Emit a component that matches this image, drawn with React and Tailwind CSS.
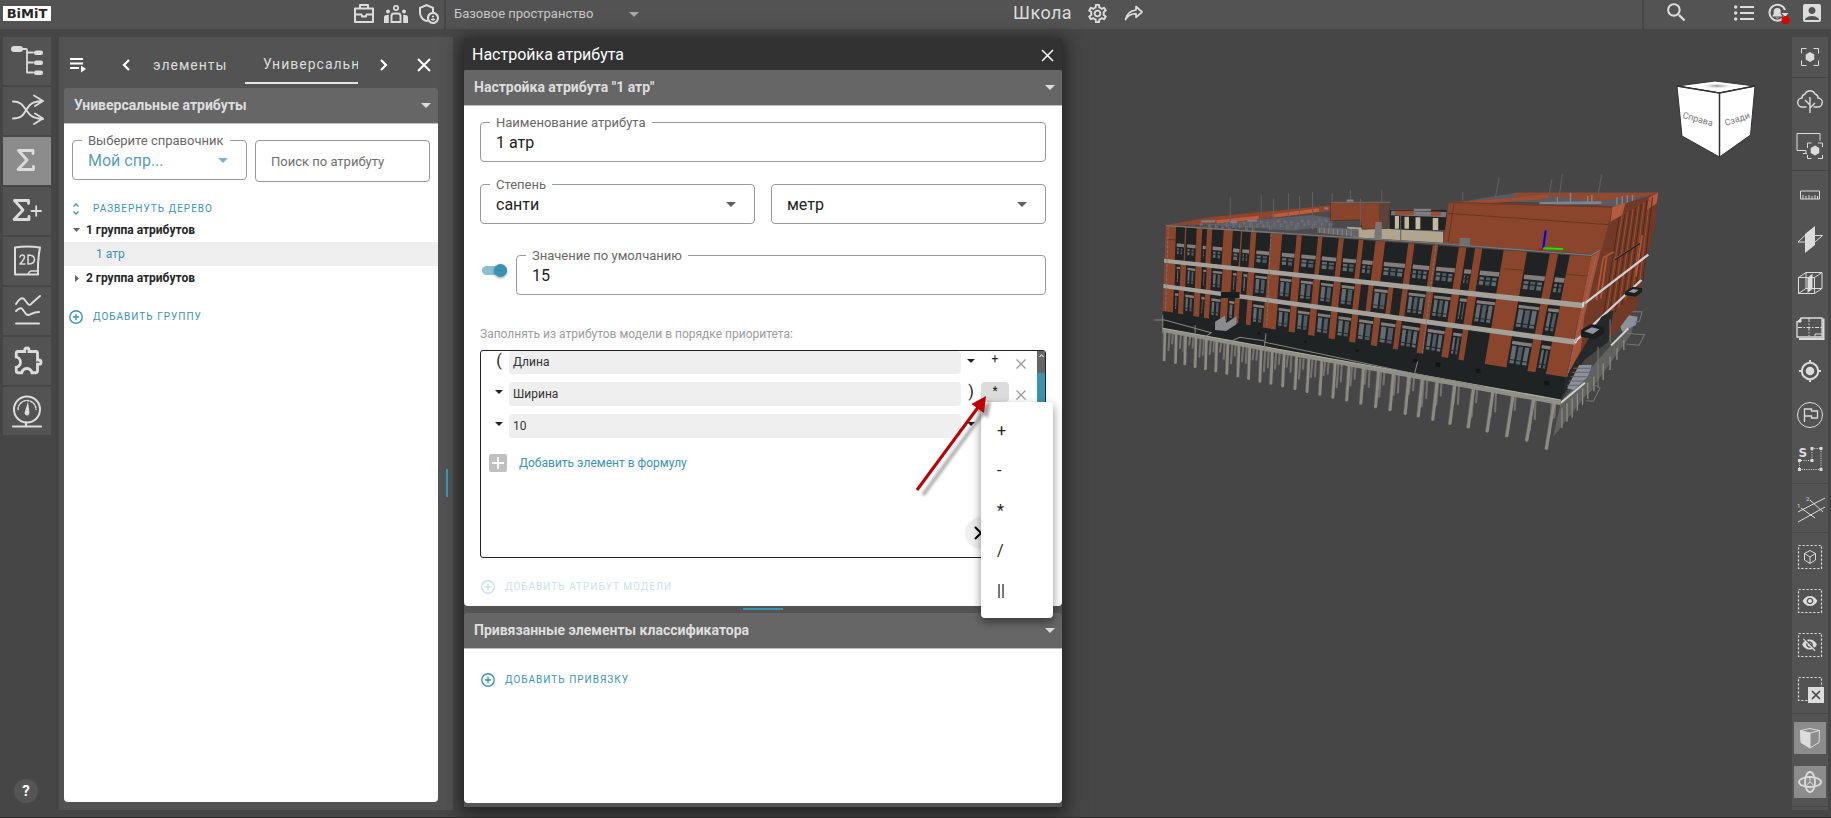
import React from "react";
import {
  MdSearch,
  MdAccountBox,
  MdOutlineAdminPanelSettings,
  MdOutlineSettings,
  MdOutlineExtension,
  MdVisibility,
  MdVisibilityOff,
} from "react-icons/md";

/* ---------- small shared pieces ---------- */

function Caret({ className = "" }) {
  return (
    <svg className={`h-[5px] w-[10px] shrink-0 ${className}`} viewBox="0 0 10 5" fill="currentColor" aria-hidden="true">
      <path d="M0 0h10L5 5z" />
    </svg>
  );
}

function SmallCaret() {
  return (
    <svg className="h-1 w-2" viewBox="0 0 8 4" fill="currentColor" aria-hidden="true">
      <path d="M0 0h8L4 4z" />
    </svg>
  );
}

function PlusCircle() {
  return (
    <svg className="h-[14px] w-[14px] shrink-0" viewBox="0 0 14 14" fill="none" stroke="currentColor" strokeWidth="1.4" aria-hidden="true">
      <circle cx="7" cy="7" r="6.2" />
      <path d="M7 3.8v6.4M3.8 7h6.4" />
    </svg>
  );
}

function AddButton({ children, className = "text-[#3a94b1]" }) {
  return (
    <button type="button" className={`flex items-center gap-[10px] text-[10px] leading-4 tracking-widest uppercase ${className}`}>
      <PlusCircle />
      {children}
    </button>
  );
}

function SectionHeader({ children, className = "" }) {
  return (
    <div className={`flex h-9 items-center justify-between rounded-t-[3px] border-b border-[#bdbdbd] bg-[#666] text-[14px] font-bold text-[#dedede] ${className}`}>
      <h2>{children}</h2>
      <Caret />
    </div>
  );
}

function Field({ id, label, children, className = "" }) {
  return (
    <div className={`relative h-10 rounded border border-[#999] ${className}`}>
      {label && (
        <label htmlFor={id} className="absolute -top-2 left-[9px] bg-white px-[6px] text-[13px] leading-4 whitespace-nowrap text-[#686868]">
          {label}
        </label>
      )}
      {children}
    </div>
  );
}

function SelectField({ id, label, value, className = "", tone = "text-[#222]", caretTone = "text-[#5f5f5f]" }) {
  return (
    <Field id={id} label={label} className={`min-w-0 ${className}`}>
      <select id={id} aria-label={label ? undefined : "Единица измерения"} defaultValue={value} className={`h-full w-full appearance-none bg-transparent pt-[2px] pr-8 pl-[15px] text-[16px] outline-none ${tone}`}>
        <option>{value}</option>
      </select>
      <Caret className={`pointer-events-none absolute top-[17px] right-[18px] ${caretTone}`} />
    </Field>
  );
}

/* ---------- header ---------- */

function Header() {
  return (
    <header className="flex h-[29px] shrink-0 items-center bg-[#535353] text-[#dcdcdc]">
      <a href="#home" className="mt-[-2px] ml-[3px] flex h-[15px] w-12 items-center justify-center bg-white font-['DejaVu_Sans'] text-[13px] leading-none font-bold text-[#262626]">
        BiM
        <span className="relative">
          i<span className="absolute top-[1px] left-[1px] h-[2px] w-[2px] bg-[#e00]" />
        </span>
        T
      </a>
      <nav className="ml-[301px] flex items-center gap-[8px]">
        <button type="button" aria-label="Проекты" className="mb-1">
          <svg className="h-5 w-6" viewBox="0 0 24 20" fill="none" stroke="currentColor" strokeWidth="2">
            <path d="M3 5.500h18v13.500H3zM3 11.500h7M14 11.500h7M8 5V2h8v3M10 11.500v2h4v-2" strokeLinejoin="round" />
          </svg>
        </button>
        <button type="button" aria-label="Участники" className="mb-1">
          <svg className="h-5 w-6" viewBox="0 0 24 20" fill="currentColor">
            <circle cx="12" cy="5" r="2.200" fill="none" stroke="currentColor" strokeWidth="1.700" />
            <circle cx="4" cy="8.500" r="2" />
            <circle cx="20" cy="8.500" r="2" />
            <path d="M7.500 19v-6q0-2.500 2.500-2.500h4q2.500 0 2.500 2.500v6z" fill="none" stroke="currentColor" strokeWidth="1.900" />
            <path d="M0 20v-5.500Q0 12 2.500 12h2.300v8zM24 20v-5.500Q24 12 21.500 12h-2.300v8z" />
          </svg>
        </button>
        <button type="button" aria-label="Администрирование" className="mb-1">
          <MdOutlineAdminPanelSettings className="h-6 w-6" />
        </button>
      </nav>
      <div className="ml-1 flex h-full flex-1 items-center border-l-2 border-[#464646] pl-2">
        <label className="relative flex items-center">
          <select aria-label="Пространство" className="mb-[2px] w-[185px] appearance-none bg-transparent text-[13px] text-[#c8c8c8] outline-none">
            <option>Базовое пространство</option>
          </select>
          <Caret className="pointer-events-none absolute top-[8px] right-0 text-[#a8a8a8]" />
        </label>
        <div className="mb-[3px] ml-[374px] flex items-center">
          <h1 className="text-[18px] leading-6 tracking-wide">Школа</h1>
          <button type="button" aria-label="Настройки" className="ml-[14px]">
            <MdOutlineSettings className="h-[23px] w-[23px]" />
          </button>
          <button type="button" aria-label="Поделиться" className="ml-[15px]">
            <svg className="h-5 w-5" viewBox="0 0 20 20" fill="none" stroke="currentColor" strokeWidth="1.700" strokeLinejoin="round">
              <path d="M12 3.500 18 9l-6 5.300v-3.600C7 10.700 4 12.500 1.500 16.500 2.600 11 6 7.700 12 7z" />
            </svg>
          </button>
        </div>
      </div>
      <nav className="flex h-full items-center border-l-2 border-[#464646] pb-1">
        <button type="button" aria-label="Поиск" className="ml-5">
          <MdSearch className="h-[25px] w-[25px]" />
        </button>
        <button type="button" aria-label="Список" className="ml-[45px]">
          <svg className="h-4 w-5" viewBox="0 0 20 16" fill="currentColor">
            <path d="M6 1h14v2H6zM6 7h14v2H6zM6 13h14v2H6z" />
            <circle cx="1.700" cy="2" r="1.700" />
            <circle cx="1.700" cy="8" r="1.700" />
            <circle cx="1.700" cy="14" r="1.700" />
          </svg>
        </button>
        <button type="button" aria-label="Уведомления" className="ml-3">
          <svg className="h-6 w-6" viewBox="0 0 24 24">
            <path d="M18.500 15.500a8 8 0 1 1 .5-6.500" fill="none" stroke="#dcdcdc" strokeWidth="2" />
            <path d="m15.500 12 7 0-3.500 4z" fill="#dcdcdc" />
            <path d="M6.500 15.500v-1l1.200-1.200V10.500a3.500 3.500 0 0 1 7 0v2.800l1.200 1.200v1zM9.800 16.500h3q-1.500 2-3 0z" fill="#dcdcdc" />
            <circle cx="19.500" cy="19" r="4" fill="#e00000" />
          </svg>
        </button>
        <button type="button" aria-label="Профиль" className="mr-[7px] ml-[10px]">
          <MdAccountBox className="h-6 w-6" />
        </button>
      </nav>
    </header>
  );
}

/* ---------- left rail ---------- */

const railIcons = [
  {
    name: "Дерево",
    draw: (
      <>
        <rect x="8" y="9" width="12" height="6" rx="3" fill="currentColor" stroke="none" />
        <path d="M19 12h4q1 0 1 1.200V35.500h6M24 15.500h6M24 25.500h6" strokeWidth="1.800" />
        <rect x="31" y="13.500" width="9" height="4.500" rx="2" fill="currentColor" stroke="none" />
        <rect x="31" y="23.500" width="9" height="4.500" rx="2" fill="currentColor" stroke="none" />
        <rect x="31" y="33.500" width="9" height="4.500" rx="2" fill="currentColor" stroke="none" />
      </>
    ),
  },
  {
    name: "Связи",
    draw: (
      <g strokeWidth="1.900">
        <path d="M10 14.500c8 0 10 4 13.500 9s6 8 16.500 8.500M10 31.500c8 0 10-3 13.500-9S30 14.500 40 14M31 8.500l9 5.500-8 5M31 37l9-5.500-8-5" />
      </g>
    ),
  },
  { name: "Атрибуты", active: true, draw: <path d="M30 16.500v-3H15.500L24 23l-9 9.500h15.500v-3" strokeWidth="2.800" /> },
  {
    name: "Добавить атрибут",
    draw: (
      <>
        <path d="M25.500 16.500v-3H11.500l8.500 9.500-9 9.500h15v-3" strokeWidth="2.800" />
        <path d="M28.500 24H38M33.200 19.200v9.600" strokeWidth="1.800" />
      </>
    ),
  },
  {
    name: "2D",
    draw: (
      <>
        <path d="M12 10.500q12-2 25 0-2.500 13-2 27H12z" strokeWidth="2" />
        <path d="M25 37q1-2.500 3-3h7" strokeWidth="1.600" />
        <path d="M17 20q.5-2 2.300-2 2.200 0 2.200 2 0 2-4.500 7h5M25 18v9q6.500 0 6.500-4.500T25 18z" strokeWidth="1.500" />
      </>
    ),
  },
  { name: "Графики", draw: <path d="M13 17q5-8 8-5l4 5q2 2 4-1l8-7M13 24q5-5 7-1l3 4q2 2 5 0 4-2 8-2M13 36.500h23" strokeWidth="2" /> },
  { name: "Плагины", draw: null },
  {
    name: "Показатели",
    draw: (
      <>
        <circle cx="24" cy="22.500" r="13" strokeWidth="2" />
        <path d="M15 22.500a9 9 0 0 1 18 0" strokeWidth="1.500" strokeDasharray="2 1.500" />
        <path d="M25 14.500 26.500 26q-.5 2.500-2.500 2.500T21.500 26z" fill="currentColor" stroke="none" />
        <path d="M23 35.500v3M10 39.500h28" strokeWidth="2.200" />
      </>
    ),
  },
];

function LeftRail() {
  return (
    <aside className="flex w-14 shrink-0 flex-col pl-[3px]">
      <div className="flex flex-1 flex-col gap-[2px]">
        {railIcons.map((it) => (
          <button
            key={it.name}
            type="button"
            aria-label={it.name}
            className={`flex h-12 w-12 items-center justify-center text-[#dcdcdc] ${it.active ? "bg-[#8c8c8c]" : "bg-[#535353]"}`}
          >
            {it.draw ? (
              <svg className="h-12 w-12" viewBox="0 0 48 48" fill="none" stroke="currentColor" strokeLinecap="round" strokeLinejoin="round">
                {it.draw}
              </svg>
            ) : (
              <MdOutlineExtension className="mb-[2px] ml-1 h-[34px] w-[34px]" />
            )}
          </button>
        ))}
      </div>
      <button type="button" aria-label="Справка" className="mb-[7px] ml-[11px] flex h-6 w-6 items-center justify-center rounded-full bg-[#555] text-[15px] font-bold text-white">
        ?
      </button>
    </aside>
  );
}

/* ---------- attributes panel ---------- */

function Chevron({ left, className = "" }) {
  return (
    <svg className={`h-3 w-2 ${className}`} viewBox="0 0 8 12" fill="none" stroke="currentColor" strokeWidth="2.200">
      <path d={left ? "M7 1 2 6l5 5" : "M1 1l5 5-5 5"} />
    </svg>
  );
}

function AttributesPanel() {
  return (
    <section className="flex w-[394px] shrink-0 flex-col bg-[#535353] pr-[15px] pb-2 pl-[5px]">
      <div className="flex h-[51px] shrink-0 items-center pt-[5px] text-white">
        <button type="button" aria-label="Меню" className="ml-[6px] w-[22px]">
          <svg className="h-4 w-4" viewBox="0 0 16 16" fill="currentColor">
            <path d="M0 1h13v2H0zM0 5.500h13v2H0zM0 10h9v2H0zM11 8.500l5 3.500-5 3.500z" />
          </svg>
        </button>
        <button type="button" aria-label="Назад" className="ml-[30px]">
          <Chevron left />
        </button>
        <div role="tablist" className="ml-[7px] flex w-[221px] overflow-hidden text-[14px] tracking-[1px] text-[#dcdcdc]">
          <button type="button" role="tab" aria-selected="false" className="h-[38px] w-[108px] shrink-0 pr-2 pl-4 text-left">
            элементы
          </button>
          <button type="button" role="tab" aria-selected="true" className="h-[38px] min-w-0 flex-1 overflow-hidden border-b-2 border-[#e4e4e4] pl-[18px] text-left whitespace-nowrap">
            Универсальные
          </button>
        </div>
        <button type="button" aria-label="Вперёд" className="ml-[22px]">
          <Chevron />
        </button>
        <button type="button" aria-label="Закрыть" className="ml-[29px]">
          <svg className="h-[14px] w-[14px]" viewBox="0 0 14 14" stroke="currentColor" strokeWidth="2">
            <path d="M1 1l12 12M13 1 1 13" />
          </svg>
        </button>
      </div>
      <SectionHeader className="shrink-0 pr-[7px] pl-[10px]">Универсальные атрибуты</SectionHeader>
      <div className="flex-1 rounded-b bg-white">
        <div className="grid grid-cols-2 gap-2 px-2 pt-4">
          <SelectField id="dictionary" label="Выберите справочник" value="Мой спр..." tone="text-[#559fb9]" caretTone="text-[#7ab4c8]" />
          <input
            aria-label="Поиск по атрибуту"
            placeholder="Поиск по атрибуту"
            className="h-[42px] w-full min-w-0 rounded border border-[#999] px-[15px] text-[13px] outline-none placeholder:text-[#6e6e6e]"
          />
        </div>
        <button type="button" className="mt-[19px] ml-[9px] flex items-center gap-[14px] text-[10px] leading-4 tracking-widest text-[#3a94b1] uppercase">
          <svg className="h-3 w-[6px]" viewBox="0 0 6 12" fill="none" stroke="currentColor" strokeWidth="1.300">
            <path d="M.5 3.500 3 1l2.500 2.500M.5 8.500 3 11l2.500-2.500" />
          </svg>
          Развернуть дерево
        </button>
        <ul className="mt-[1px] text-[12px] leading-6 font-bold text-[#262626]">
          <li className="flex h-6 items-center gap-[6px] pl-[9px]">
            <span className="flex w-[7px] justify-center text-[#666]">
              <svg className="h-1 w-[7px]" viewBox="0 0 7 4" fill="currentColor"><path d="M0 0h7L3.500 4z" /></svg>
            </span>
            1 группа атрибутов
          </li>
          <li className="h-6 bg-[#efefef] pl-8 font-normal text-[#3a94b1]">1 атр</li>
          <li className="flex h-6 items-center gap-[6px] pl-[9px]">
            <span className="flex w-[7px] justify-center text-[#666]">
              <svg className="h-[7px] w-1" viewBox="0 0 4 7" fill="currentColor"><path d="M0 0v7l4-3.500z" /></svg>
            </span>
            2 группа атрибутов
          </li>
        </ul>
        <AddButton className="mt-[19px] ml-[5px] text-[#3a94b1]">Добавить группу</AddButton>
      </div>
    </section>
  );
}

/* ---------- attribute window ---------- */

function RemoveButton() {
  return (
    <button type="button" aria-label="Удалить" className="flex w-7 justify-center pt-2 pr-1 text-[#999]">
      <svg className="h-[10px] w-[10px]" viewBox="0 0 10 10" stroke="currentColor" strokeWidth="1.300">
        <path d="M.5.5l9 9M9.500.5l-9 9" />
      </svg>
    </button>
  );
}

function OperatorMenu() {
  return (
    <>
      <div role="menu" className="absolute top-full left-0 z-20 flex w-[72px] flex-col rounded bg-white pt-[9px] pb-[7px] shadow-[0_4px_10px_rgba(0,0,0,0.45)]">
        {["+", "-", "*", "/", "||"].map((op) => (
          <button key={op} type="button" role="menuitem" className="h-10 pl-4 text-left text-[16px] text-[#222]">
            {op}
          </button>
        ))}
      </div>
      <svg className="pointer-events-none absolute top-[10px] -left-[68px] z-30 h-[108px] w-[84px]" viewBox="0 0 84 108" fill="none">
        <defs>
          <filter id="arrow-shadow">
            <feGaussianBlur stdDeviation="1.500" />
          </filter>
        </defs>
        <g opacity="0.350" transform="translate(5 5)" filter="url(#arrow-shadow)">
          <path d="M5 98 65 16" stroke="#000" strokeWidth="3.500" />
          <path d="M73 4 70 21 58 12z" fill="#000" />
        </g>
        <path d="M4 98 66 14" stroke="#c00000" strokeWidth="3" />
        <path d="M73 4 71 21 58.500 12z" fill="#c00000" />
      </svg>
    </>
  );
}

function FormulaRow({ open, value, close, operator, menu, className = "h-6" }) {
  return (
    <div className={`flex text-[#222] ${className}`}>
      <button type="button" aria-label="Открывающая скобка" className={`flex w-7 justify-center pl-2 ${open ? "text-[16px] leading-5" : "pt-2"}`}>
        {open || <SmallCaret />}
      </button>
      <input aria-label="Элемент формулы" defaultValue={value} className="h-full min-w-0 flex-1 rounded bg-[#efefef] px-1 pb-px text-[12px] text-[#333] outline-none" />
      <button type="button" aria-label="Закрывающая скобка" className={`flex w-5 justify-center ${close ? "text-[16px] leading-5" : "pt-2"}`}>
        {close || <SmallCaret />}
      </button>
      <div className="relative h-5 w-7">
        {operator && (
          <button type="button" aria-label="Оператор" className={`flex h-5 w-7 justify-center rounded text-[12px] leading-4 ${menu ? "bg-[#dcdcdc] pt-px" : ""}`}>
            {operator}
          </button>
        )}
        {menu && <OperatorMenu />}
      </div>
      <RemoveButton />
    </div>
  );
}

function AttributeWindow() {
  return (
    <section className="relative z-10 mt-[1px] mb-[3px] flex w-[598px] shrink-0 flex-col bg-[#535353] pb-1 shadow-[0_4px_16px_4px_rgba(0,0,0,0.5)]">
      <div className="flex h-8 shrink-0 items-center justify-between bg-[#323232] px-2 pt-[2px] text-[16px] text-white">
        <span>Настройка атрибута</span>
        <button type="button" aria-label="Закрыть окно">
          <svg className="h-[13px] w-[13px]" viewBox="0 0 13 13" stroke="currentColor" strokeWidth="1.500">
            <path d="M1 1l11 11M12 1 1 12" />
          </svg>
        </button>
      </div>
      <SectionHeader className="shrink-0 pr-[7px] pl-[10px]">Настройка атрибута "1 атр"</SectionHeader>
      <div className="rounded-b bg-white px-4 pt-4 pb-[11px]">
        <Field id="attr-name" label="Наименование атрибута">
          <input id="attr-name" defaultValue="1 атр" className="h-full w-full bg-transparent px-[15px] text-[16px] text-[#222] outline-none" />
        </Field>
        <div className="mt-[22px] grid grid-cols-2 gap-4">
          <SelectField id="degree" label="Степень" value="санти" />
          <SelectField id="unit" value="метр" />
        </div>
        <div className="mt-[31px] flex items-start">
          <label className="relative mt-[9px] ml-[2px] flex h-[13px] w-[34px] items-center">
            <input type="checkbox" defaultChecked aria-label="Значение по умолчанию включено" className="peer h-[9px] w-[25px] appearance-none rounded-full bg-[#8bbfd0]" />
            <span className="absolute top-0 left-3 h-[13px] w-[13px] rounded-full bg-[#3a94b1] shadow-[0_1px_3px_rgba(0,0,0,0.4)]" />
          </label>
          <Field id="default-value" label="Значение по умолчанию" className="flex-1">
            <input id="default-value" defaultValue="15" className="h-full w-full bg-transparent px-[15px] text-[16px] text-[#222] outline-none" />
          </Field>
        </div>
        <p className="mt-[31px] text-[12px] leading-4 text-[#9b9b9b]">Заполнять из атрибутов модели в порядке приоритета:</p>
        <div className="relative mt-2 flex h-[208px] rounded-[3px] border border-[#222]">
          <div className="flex flex-1 flex-col gap-2">
            <FormulaRow open="(" value="Длина" operator="+" className="h-[23px]" />
            <FormulaRow value="Ширина" close=")" operator="*" menu />
            <FormulaRow value="10" />
            <button type="button" className="mt-2 flex items-center gap-3 self-start pl-2 text-[12px] leading-[18px] text-[#3a94b1]">
              <span className="flex h-[18px] w-[18px] items-center justify-center rounded-[2px] bg-[#c0c0c0] text-white">
                <svg className="h-3 w-3" viewBox="0 0 12 12" stroke="currentColor" strokeWidth="1.800"><path d="M6 0v12M0 6h12" /></svg>
              </span>
              Добавить элемент в формулу
            </button>
          </div>
          <div className="flex w-2 flex-col bg-[#3a94b1]">
            <span className="flex h-[22px] justify-center bg-[#666] pt-[3px] text-white">
              <svg className="h-[3px] w-[5px]" viewBox="0 0 5 3" fill="none" stroke="currentColor"><path d="M.5 3 2.500.7 4.500 3" /></svg>
            </span>
          </div>
          <button type="button" aria-label="Далее" className="absolute right-12 bottom-2 flex h-8 w-8 items-center justify-center rounded-full bg-[#efefef] text-black">
            <svg className="mr-[6px] h-[14px] w-2" viewBox="0 0 8 14" fill="none" stroke="currentColor" strokeWidth="2"><path d="M1 1l6 6-6 6" /></svg>
          </button>
        </div>
        <AddButton className="mt-[21px] ml-[1px] text-[#c9e2ea]">Добавить атрибут модели</AddButton>
      </div>
      <div className="flex h-[7px] shrink-0 items-start justify-center pt-[2px]">
        <span className="h-[2px] w-10 bg-[#3a94b1]" />
      </div>
      <SectionHeader className="shrink-0 pr-[7px] pl-[10px]">Привязанные элементы классификатора</SectionHeader>
      <div className="flex-1 rounded-b bg-white px-[17px] pt-[23px]">
        <AddButton>Добавить привязку</AddButton>
      </div>
    </section>
  );
}

/* ---------- 3D viewport ---------- */

const yRoof = (x) => 197 + (x - 75) * 0.0753;
const yBand1 = (x) => 296 + (x - 70) * 0.1087;
const yBand1b = (x) => 308 + (x - 70) * 0.112;
const yBand2 = (x) => 372 + (x - 68) * 0.139;
const yBand2b = (x) => 384 + (x - 68) * 0.1415;
const yWall = (x) => 453 + (x - 66) * 0.17;
const lean = (x) => 0.035 + ((x - 75) / 1235) * 0.165;

const floors = [
  {
    top: yRoof,
    bottom: yBand1,
    glass: 0.5,
    bays: [[105, 131], [135, 165], [181, 195], [210, 243], [270, 293], [297, 322], [338, 380], [413, 455], [470, 517], [530, 577], [592, 635], [649, 684], [712, 779], [797, 850], [866, 926], [948, 973], [994, 1056], [1124, 1190], [1214, 1248]],
  },
  {
    top: yBand1b,
    bottom: yBand2,
    glass: 0.12,
    bays: [[103, 118], [134, 162], [180, 194], [208, 240], [267, 282], [297, 313], [332, 370], [404, 442], [464, 504], [523, 563], [583, 625], [642, 664, 1], [678, 722], [736, 762, 1], [778, 832], [852, 905], [927, 952], [976, 1034], [1098, 1163], [1184, 1220]],
  },
  {
    top: yBand2b,
    bottom: yWall,
    glass: 0.15,
    bays: [[98, 113], [128, 158], [175, 189], [204, 236], [256, 276], [290, 312, 1], [326, 362], [400, 438], [456, 495], [514, 555], [574, 616], [634, 680], [698, 745], [760, 815], [834, 888], [908, 938], [954, 1016, 1], [1080, 1142], [1166, 1197]],
  },
];

function bayPoly(floor, a, b, from, to) {
  const pt = (x, t) => {
    const h = floor.bottom(x) - floor.top(x);
    const y = floor.top(x) + h * t;
    return `${(x - lean(x) * h * t).toFixed(1)},${y.toFixed(1)}`;
  };
  return [pt(a, from), pt(b, from), pt(b, to), pt(a, to)].join(" ");
}

function Bay({ floor, bay }) {
  const [a, b, blank] = bay;
  const w = b - a;
  const n = w > 50 ? 3 : w > 24 ? 2 : 1;
  const g = floor.glass;
  const panes = [];
  for (let i = 0; i < n; i++) {
    const x1 = a + 6 + (i * (w - 6)) / n;
    const x2 = a + ((i + 1) * (w - 6)) / n;
    panes.push(<polygon key={i} points={bayPoly(floor, x1, x2, g + 0.14, 0.82)} fill={i % 2 ? "#505c63" : "#616c73"} />);
  }
  return (
    <>
      <polygon points={bayPoly(floor, a, b, 0, 1)} fill="#1f2324" />
      {!blank && (
        <>
          <polygon points={bayPoly(floor, a + 4, b - 1, g, g + 0.1)} fill="#837e7c" />
          {panes}
          <polygon points={bayPoly(floor, a + 2, b - 2, 0.7, 0.73)} fill="#24282a" />
        </>
      )}
    </>
  );
}

const piles = [[70, 600], [103, 608], [130, 612], [160, 620], [190, 626], [220, 633], [252, 640], [284, 648], [315, 656], [348, 664], [380, 670], [414, 678], [450, 686], [485, 695], [522, 703], [560, 712], [600, 720], [641, 730], [684, 740], [726, 749], [770, 760], [808, 768], [850, 778], [900, 790], [953, 801], [1008, 813], [1065, 827], [1123, 840], [1180, 865]];
const masts = [[262, 112, 190], [352, 106, 180], [388, 115, 178], [431, 98, 170], [463, 108, 165], [501, 95, 165], [558, 100, 128], [611, 90, 122], [702, 88, 126], [937, 95, 122], [1194, 58, 125], [1225, 42, 120], [1338, 44, 122], [1041, 52, 118], [640, 115, 195], [757, 155, 240]];
const clutter = Array.from({ length: 38 }, (_, i) => [175 + i * 10 + ((i * 7) % 5), 192 - i * 0.5 + ((i * 13) % 22), 4 + ((i * 5) % 6)]);

function Building() {
  return (
    <svg className="absolute top-[123px] left-[78px] h-[300px] w-[540px]" viewBox="0 0 1568 900" preserveAspectRatio="none" role="img" aria-label="Модель здания школы">
      {/* piles */}
      {piles.map(([x, y], i) => {
        const k = x / 1180;
        const top = 515 + (x - 66) * 0.19;
        return (
          <g key={x} stroke="#8c8b84" strokeLinecap="round">
            <path d={`M${x + 16} ${top}L${x + 13 - 4 * k} ${y - 30 - 14 * (i % 3)}M${x + 26} ${top}l-3 ${34 + 16 * (i % 2) + 12 * k}`} stroke="#74736f" strokeWidth="6" />
            <path d={`M${x + 2 + 20 * k * k} ${top}L${x} ${y}`} strokeWidth={8 + 2 * k} />
            <path d={`M${x - 3 + 20 * k * k} ${top}L${x - 4} ${y - 6}`} stroke="#5f5f5b" strokeWidth="2" />
          </g>
        );
      })}
      {/* side foundation */}
      <path d="M1222 725 1330 600 1440 470 1425 525 1330 660 1200 830z" fill="#61615f" />
      <path d="M1225 745v60M1240 730v55M1255 715v58M1270 700v52M1285 685v50M1300 668v48M1318 650v44M1345 610v50M1365 590v40M1385 565v34M1405 540v30" stroke="#8a8a86" strokeWidth="4" />
      {/* roof and rear blocks */}
      <path d="M75 197 560 140 895 150 880 250 600 232z" fill="#4b4b4e" />
      <path d="M75 196 200 172 560 135 560 152 330 180 150 196z" fill="#8f452b" />
      <path d="M222 186 345 172M385 168 520 150" stroke="#c05a3a" strokeWidth="10" />
      <path d="M180 194 500 165 560 175 560 198 440 212z" fill="#5d5e66" />
      {clutter.map(([x, y, h]) => (
        <path key={x} d={`M${x} ${y}h7v${h}h-7zM${x + 2} ${y - 5}v${h + 8}`} fill="#5a5a5d" stroke="#808085" strokeWidth="1.200" />
      ))}
      <path d="M725 150H890V210H725z" fill="#1f2324" />
      <path d="M740 168h12v38h-12zM768 170h13v36h-13zM800 172h14v36h-14zM850 174h16v36h-16z" fill="#c3b99c" />
      <path d="M730 152 890 156 888 172 728 166z" fill="#77767a" />
      <path d="M740 152h55v13h-55zM845 155h28v12h-28z" fill="#9b4a2e" />
      <path d="M600 200 880 215 880 248 620 232z" fill="#b0a68e" />
      <path d="M553 127 727 129 715 205 645 208 640 180 553 182z" fill="#8a442b" stroke="#4a2a20" strokeWidth="2" />
      <path d="M693 133 727 130 715 205 695 200z" fill="#5d4238" />
      <path d="M553 127H727" stroke="#66666a" strokeWidth="4" />
      <path d="M515 200 635 208V232L515 218z" fill="#66666a" />
      <path d="M522 203v16M535 204v16M548 205v16M561 206v18M574 207v18M587 207v20M600 208v20M613 208v22" stroke="#8f8f92" strokeWidth="2.500" />
      <path d="M684 186h18v50h-22z" fill="#77777a" />
      {/* upper right block */}
      <path d="M1090 98 1505 98 1400 140 1190 128 950 122z" fill="#5b5a60" />
      <path d="M1090 98 1505 98 1500 106 1330 122 1180 108 1090 112z" fill="#94482e" />
      <path d="M897 127 1060 116 1185 102V116L1010 130z" fill="#a04c30" />
      <path d="M1160 130 1340 128" stroke="#82828a" strokeWidth="8" />
      <path d="M1212 112v22M1300 108v24M1312 104v26M1250 98v28M1385 112v22M1400 108v24M1415 106v24M1430 104v22" stroke="#85858a" strokeWidth="4" />
      <path d="M897 127 1372 141 1340 285 880 250z" fill="#8a452c" />
      <path d="M897 127 1372 141" stroke="#6d3a29" strokeWidth="4" />
      <path d="M893 160 1362 194M912 130 895 245" stroke="#54301f" strokeWidth="2" fill="none" />
      <path d="M928 234h30v24h-30z" fill="#6b7271" />
      {/* side facade */}
      <path d="M1310 290 1340 270 1375 141 1505 98 1497 190 1475 280 1440 450 1380 520 1237 652z" fill="#713a27" />
      <path d="M1372 141 1410 128 1400 165 1366 185zM1478 112 1505 98 1500 130 1472 150z" fill="#b55b3f" />
      <path d="M1310 290 1337 273 1290 470 1280 570 1240 650z" fill="#a85239" />
      {Array.from({ length: 13 }, (_, i) => {
        const x = 1392 + i * 8;
        return <path key={i} d={`M${x} ${172 - i * 5}L${x - 52 + i * 2} ${505 - i * 12}`} stroke={i % 2 ? "#9b4e34" : "#4f2b1f"} strokeWidth="3" />;
      })}
      <path d="M1345 295 1325 420M1355 290 1338 415M1458 225 1440 350M1345 293 1375 276M1375 300 1455 248" stroke="#b2563a" strokeWidth="5" fill="none" />
      <path d="M1378 300 1452 250" stroke="#1f2324" strokeWidth="4" />
      <path d="M1284 436 1476 284M1262 546 1456 360" stroke="#cfcfd2" strokeWidth="7" />
      <path d="M1340 470 1375 450 1360 545 1290 600 1240 690 1222 720 1237 652z" fill="#25292a" />
      <path d="M1280 510 1310 492 1348 500V520L1320 538 1280 530zM1408 395 1430 380 1458 384V396L1440 410 1408 406z" fill="#1b1e1f" />
      <path d="M1290 514 1312 502 1334 508 1315 522zM1418 395 1432 387 1448 390 1436 399z" fill="#9295a0" />
      <path d="M1240 685 1275 615 1312 615 1300 650 1260 690zM1395 500 1420 466 1445 470 1440 495 1400 515z" fill="#8d909a" />
      <path d="M1258 625h48M1255 637h48M1250 650h50M1245 663h45M1240 676h36" stroke="#62646c" strokeWidth="3" />
      <path d="M1222 728 1292 668M1368 556 1418 505" stroke="#d0d0d0" strokeWidth="6" />
      <path d="M1365 478v70M1330 560v120M1430 455h28l-8 30h-15M1415 520l20 2 30 2-16 32-36-4M1300 700l22-24 14 8-20 40-20-2" stroke="#77777a" strokeWidth="3" fill="none" />
      {/* front facade */}
      <path d="M75 197 1310 290 1237 652 66 453z" fill="#8a452c" />
      {floors.map((f, fi) => f.bays.map((b) => <Bay key={`${fi}-${b[0]}`} floor={f} bay={b} />))}
      <path d="M82 238 105 240M1056 326 1118 331M1238 343 1300 348" stroke="#54301f" strokeWidth="2" />
      <path d="M70 296 1284 428V445L70 308zM68 372 1262 538V554L68 384z" fill="#a3a199" />
      <path d="M1284 428 1290 424 1290 440 1284 445zM1262 538 1268 533V548L1262 554z" fill="#d6d6d6" />
      <path d="M75 197 600 232 860 250 1310 286 1336 270" stroke="#77777a" strokeWidth="4" fill="none" />
      <path d="M380 222 368 500M860 252 820 580M82 200 74 455M1325 290 1240 650" stroke="#77777a" strokeWidth="2.500" strokeDasharray="10 4" fill="none" />
      {/* plinth */}
      <path d="M66 453 1237 652 1222 722 66 508z" fill="#1f2324" />
      <path d="M66 505 1222 720V736L66 516z" fill="#8f8e87" />
      <path d="M66 505 1222 720" stroke="#b0afa6" strokeWidth="3" />
      <path d="M235 396h54v18h-54z" fill="#1a1d1e" />
      <path d="M218 510v-25l28-18 4 22 30-20v24l-30 20z" fill="#8b8b8f" />
      <path d="M42 480h30l135 38-20 14M255 548l35-16 70 10M360 570l6-50M794 655l12-50M360 546 790 640 1000 680M66 520V466M160 520v-24" stroke="#85857f" strokeWidth="3" fill="none" />
      <path d="M792 596h12v10h-12zM858 608h14v12h-14zM975 628h13v11h-13zM1174 664h15v12h-15zM627 568h8v7h-8zM477 542h7v7h-7zM342 516h6v8h-6z" fill="#111314" />
      {masts.map(([x, y1, y2]) => (
        <path key={x} d={`M${x + (x > 1000 ? 2 : 0)} ${y1}L${x - (x > 1000 ? 10 : 0)} ${y2}`} stroke="#5f6062" strokeWidth="3" />
      ))}
      <path d="M178 184h40M262 186h20M312 182h28M535 145h12M600 122h20M795 150h50M800 160h44" stroke="#808083" strokeWidth="7" />
      {/* axes */}
      <path d="M1171 264 1178 211" stroke="#0000f5" strokeWidth="6" />
      <path d="M1171 265 1228 267" stroke="#00f000" strokeWidth="6" />
      <path d="M1158 267h12" stroke="#e00000" strokeWidth="5" />
    </svg>
  );
}

function ViewCube() {
  return (
    <svg className="absolute top-[42px] right-[34px] h-[80px] w-[84px]" viewBox="0 0 84 80" role="img" aria-label="Куб навигации">
      <defs>
        <radialGradient id="cube-top">
          <stop offset="0" stopColor="#8d8d8d" />
          <stop offset="1" stopColor="#fff" stopOpacity="0" />
        </radialGradient>
      </defs>
      <g stroke="#333" strokeLinejoin="round">
        <path d="M3 7 41 2 81 7 45.500 14z" fill="#fff" strokeWidth="1" />
        <path d="M3 7 45.500 14V78L8 57z" fill="#fff" strokeWidth="1" />
        <path d="M45.500 14 81 7 76.500 56 45.500 78z" fill="#fff" strokeWidth="1" />
      </g>
      <ellipse cx="43" cy="7" rx="18" ry="3" fill="url(#cube-top)" />
      <path d="M3 7 45.500 14 81 7M45.500 14V78" stroke="#333" strokeWidth="1.500" fill="none" />
      <g className="font-[Roboto] text-[9px]" fill="#777" textAnchor="middle">
        <text transform="translate(23 43) rotate(16)">Справа</text>
        <text transform="translate(64 43) rotate(-18)">Сзади</text>
      </g>
    </svg>
  );
}

/* ---------- right toolbar ---------- */

const hex = "M0-5 4.300-2.500v5L0 5-4.300 2.500v-5z";
const dashed = <rect x="-11.500" y="-11.500" width="23" height="23" strokeWidth="1.200" strokeDasharray="2.200 1.800" />;

const tools = [
  [
    {
      n: "Вписать",
      d: (
        <>
          <path d="M-8.500-3.500v-5h5M3.500-8.500h5v5M8.500 3.500v5h-5M-3.500 8.500h-5v-5" />
          <path d={hex} fill="currentColor" stroke="none" />
        </>
      ),
    },
  ],
  [
    { n: "Дерево", d: <path d="M0 11V-5M0 3l-5-5M0 6l5-5M-3.500 5h-4a4.500 4.500 0 0 1-.5-9 4 4 0 0 1 3-4 5.500 5.500 0 0 1 10 0 4 4 0 0 1 3 4 4.500 4.500 0 0 1-.5 9h-4" strokeWidth="1.400" /> },
    {
      n: "Вид",
      d: (
        <>
          <path d="M-4 7v-2.500h-9v-17h23v7M-7 7.500h4" />
          <path d="M-2.500 2v-5h4M8-3h4.500v4M12.500 9v3.500H8M1.500 12.500h-4V9" />
          <path d={hex} fill="currentColor" stroke="none" transform="translate(5 4.500)" />
        </>
      ),
    },
  ],
  [
    { n: "Линейка", d: <path d="M-9.500-4h19V4h-19zM-7 4V0M-4 4V1M-1 4V0M2 4V1M5 4V0M7.500 4V1" /> },
    {
      n: "Сечение",
      d: (
        <>
          <path d="M-12 3-5-3.500h17.500L5 3z" />
          <path d="M5-13V6L-5 14V-5z" fill="currentColor" stroke="none" />
        </>
      ),
    },
    {
      n: "Объём",
      d: (
        <>
          <path d="M-11.500-5.500h16v16h-16zM-4-10.500h16v16H-4zM-11.500-5.500l7.500-5M4.500-5.500l7.500-5M4.500 10.500l7.500-5M-11.500 10.500l7.500-5" />
          <path d="M-2.500-5 2.500-9.500V6l-5 4z" fill="currentColor" stroke="none" />
        </>
      ),
    },
    {
      n: "План",
      d: (
        <>
          <path d="M-13-6v16h25v-19h-21.500" strokeWidth="1.300" />
          <path d="M13.500-8.500v20.500H-11" strokeWidth="2" />
          <path d="M-13-5-9-9v4z" fill="currentColor" />
          <path d="M-1-9v18M-12 0.500h24" strokeDasharray="4 1.500 1.500 1.500" />
          <path d="M5 9.500V7h7" />
        </>
      ),
    },
    {
      n: "Центр",
      d: (
        <>
          <circle r="8.200" strokeWidth="2" />
          <circle r="4.300" fill="currentColor" stroke="none" />
          <path d="M0-11v3M0 11V8M-11 0h3M11 0H8" strokeWidth="2" />
        </>
      ),
    },
    {
      n: "Флаг",
      d: (
        <>
          <circle r="12.500" />
          <path d="M-5.500 7V-6h7v2h6v7h-6V1h-7" strokeWidth="1.300" />
        </>
      ),
    },
    {
      n: "Площадь",
      d: (
        <>
          <path d="M2-10.500h9v21h-21.500v-9H2z" strokeDasharray="1 1.300" />
          <path d="M.5-12h3v3h-3zM9.500-12h3v3h-3zM9.500 9h3v3h-3zM-12 9h3v3h-3zM-12 0h3v3h-3zM.5 0h3v3h-3z" fill="currentColor" stroke="none" />
          <text x="-11.500" y="-2" fontSize="12" fontWeight="bold" fill="currentColor" stroke="none" fontFamily="DejaVu Sans">S</text>
        </>
      ),
    },
  ],
  [
    {
      n: "Оси",
      d: (
        <>
          <path d="M-12 4 15-10M-12 14 15-1M-9 0 5 10M0-8 13 4" />
          <text x="-13" y="0" fontSize="6" fill="currentColor" stroke="none">1</text>
          <text x="-4" y="-7" fontSize="6" fill="currentColor" stroke="none">2</text>
        </>
      ),
    },
  ],
  [
    { n: "Выделить", d: <>{dashed}<path d="M0-6.500 5.500-3.500v6.500L0 6.500-5.500 3v-6.500zM0 0v6.500M0 0l5.500-3.500M0 0l-5.500-3.500" /></> },
    { n: "Показать", d: <>{dashed}<MdVisibility x="-8" y="-8" width="16" height="16" stroke="none" /></> },
    { n: "Скрыть", d: <>{dashed}<MdVisibilityOff x="-8.500" y="-8.500" width="17" height="17" stroke="none" /></> },
    {
      n: "Сбросить",
      d: (
        <>
          {dashed}
          <path d="M-2-2h16v16h-16z" fill="#dcdcdc" stroke="none" />
          <path d="M2 2l8 8M10 2l-8 8" stroke="#444" strokeWidth="1.600" />
        </>
      ),
    },
  ],
  [
    {
      n: "Тонирование",
      active: true,
      d: (
        <>
          <path d="M-9.500-7.500 0-5V10L-9 4.500z" fill="currentColor" />
          <path d="M0-5 9.500-7.500 9 4.500 0 10M-9.500-7.500 0-9.500 9.500-7.500" />
        </>
      ),
    },
    {
      n: "Орбита",
      active: true,
      d: (
        <>
          <ellipse rx="11" ry="5" strokeWidth="1.800" />
          <ellipse rx="5" ry="10" strokeWidth="1.800" />
          <path d="M0-4v4l-3.500 3M0 0l3.500 3" />
        </>
      ),
    },
  ],
];

function RightToolbar() {
  return (
    <aside className="mr-[3px] flex w-9 shrink-0 flex-col divide-y divide-[#464646] bg-[#535353] text-[#dcdcdc]">
      {tools.map((group, gi) => (
        <div key={gi} className={`flex flex-col ${gi === 0 ? "h-[41px] justify-center" : "py-[2px]"}`}>
          {group.map((t) => (
            <button key={t.n} type="button" aria-label={t.n} className="flex h-11 items-center justify-center">
              <span className={`flex h-8 w-8 items-center justify-center ${t.active ? "bg-[#8c8c8c]" : ""}`}>
                <svg className="h-8 w-8 overflow-visible" viewBox="-16 -16 32 32" fill="none" stroke="currentColor">
                  {t.d}
                </svg>
              </span>
            </button>
          ))}
        </div>
      ))}
      <div className="flex-1" />
    </aside>
  );
}

export default function App() {
  return (
    <div className="flex h-screen min-h-[700px] flex-col overflow-hidden border-b border-[#2b2b2b] bg-[#464646] font-[Roboto,'Noto_Sans',sans-serif]">
      <Header />
      <main className="flex min-h-0 flex-1 pt-2 pb-[7px]">
        <LeftRail />
        <div className="w-[3px] shrink-0" />
        <AttributesPanel />
        <div className="relative w-[11px] shrink-0">
          <span className="absolute top-[432px] -left-[7px] z-20 h-7 w-[2px] bg-[#3a94b1]" />
        </div>
        <AttributeWindow />
        <div className="relative min-w-0 flex-1">
          <Building />
          <ViewCube />
        </div>
        <RightToolbar />
      </main>
    </div>
  );
}
